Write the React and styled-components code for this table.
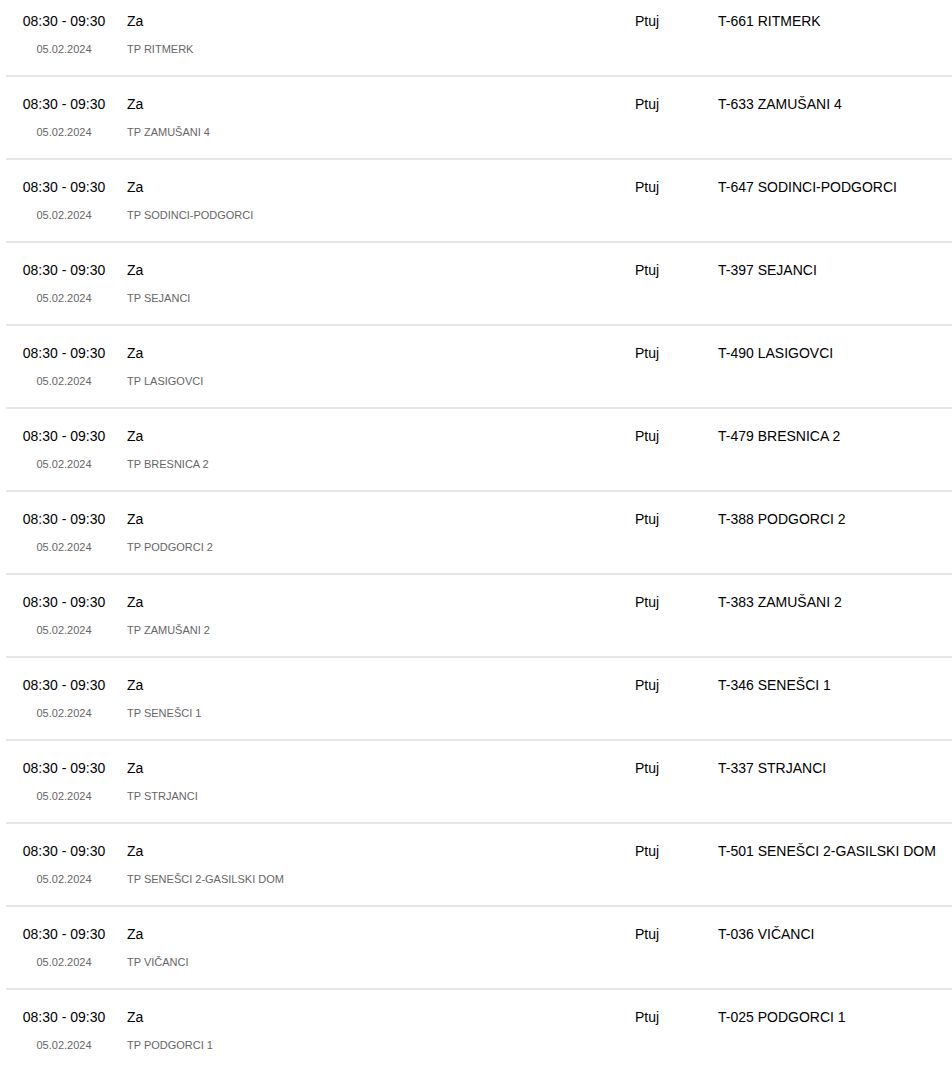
import styled, { createGlobalStyle } from "styled-components";

const rows = [
  ["RITMERK", "T-661 RITMERK"],
  ["ZAMUŠANI 4", "T-633 ZAMUŠANI 4"],
  ["SODINCI-PODGORCI", "T-647 SODINCI-PODGORCI"],
  ["SEJANCI", "T-397 SEJANCI"],
  ["LASIGOVCI", "T-490 LASIGOVCI"],
  ["BRESNICA 2", "T-479 BRESNICA 2"],
  ["PODGORCI 2", "T-388 PODGORCI 2"],
  ["ZAMUŠANI 2", "T-383 ZAMUŠANI 2"],
  ["SENEŠCI 1", "T-346 SENEŠCI 1"],
  ["STRJANCI", "T-337 STRJANCI"],
  ["SENEŠCI 2-GASILSKI DOM", "T-501 SENEŠCI 2-GASILSKI DOM"],
  ["VIČANCI", "T-036 VIČANCI"],
  ["PODGORCI 1", "T-025 PODGORCI 1"],
];

const Global = createGlobalStyle`
  body {
    margin: 0;
    background: #fff;
    font-family: "Liberation Sans", Arial, sans-serif;
    overflow: hidden;
  }
`;

const List = styled.div`
  margin: -6px 0 0 6px;
`;

const Row = styled.div`
  display: grid;
  grid-template-columns: 116px 508px 83px 1fr;
  padding: 17px 0 18px;
  border-bottom: 2px solid #e6e6e6;
`;

const Cell = styled.div`
  padding: 0 5px;
  text-align: ${(p) => (p.center ? "center" : "left")};
  white-space: nowrap;
`;

const Main = styled.div`
  font-size: 14px;
  line-height: 20px;
  color: #000;
`;

const Sub = styled.div`
  margin-top: 10px;
  font-size: 11px;
  line-height: 16px;
  color: #666;
`;

export default function App() {
  return (
    <>
      <Global />
      <List>
        {rows.map(([tp, code], i) => (
          <Row key={i}>
            <Cell center>
              <Main>08:30 - 09:30</Main>
              <Sub>05.02.2024</Sub>
            </Cell>
            <Cell>
              <Main>Za</Main>
              <Sub>TP {tp}</Sub>
            </Cell>
            <Cell>
              <Main>Ptuj</Main>
            </Cell>
            <Cell>
              <Main>{code}</Main>
            </Cell>
          </Row>
        ))}
      </List>
    </>
  );
}
